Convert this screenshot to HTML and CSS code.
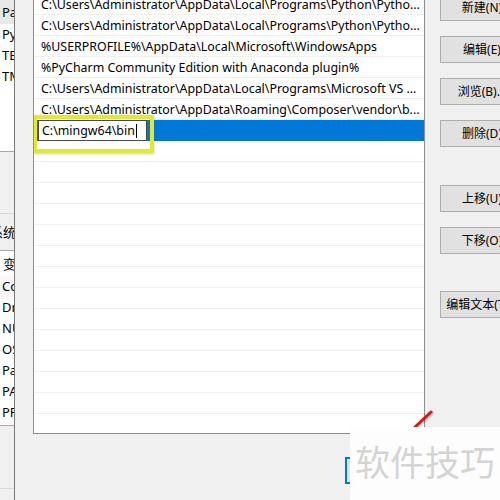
FILE: index.html
```html
<!DOCTYPE html>
<html lang="zh-CN">

<head>
    <meta charset="UTF-8">
    <meta name="viewport" content="width=device-width, initial-scale=1.0">
    <title>编辑环境变量</title>
    <link rel="stylesheet" href="styles.css">
</head>

<body>
    <div class="screen">
        <!-- 后面的“环境变量”窗口，只露出左边一条 -->
        <div class="back">
            <div class="back-list">
                <div class="back-row first">Path</div>
                <div class="back-row">PyCharm Community Edition</div>
                <div class="back-row">TEMP</div>
                <div class="back-row">TMP</div>
            </div>
            <div class="back-sep"></div>
            <div class="back-label">系统变量(S)</div>
            <div class="back-list sys">
                <div class="back-head">变量</div>
                <div class="back-row soft">ComSpec</div>
                <div class="back-row">DriverData</div>
                <div class="back-row">NUMBER_OF_PROCESSORS</div>
                <div class="back-row">OS</div>
                <div class="back-row">Path</div>
                <div class="back-row">PATHEXT</div>
                <div class="back-row">PROCESSOR_ARCHITECTURE</div>
            </div>
            <div class="back-sep low"></div>
        </div>

        <!-- 编辑环境变量对话框 -->
        <div class="front">
            <div class="main">
                <div class="path-list">
                    <div class="path-row">C:\Users\Administrator\AppData\Local\Programs\Python\Pytho...</div>
                    <div class="path-row">C:\Users\Administrator\AppData\Local\Programs\Python\Pytho...</div>
                    <div class="path-row">%USERPROFILE%\AppData\Local\Microsoft\WindowsApps</div>
                    <div class="path-row">%PyCharm Community Edition with Anaconda plugin%</div>
                    <div class="path-row">C:\Users\Administrator\AppData\Local\Programs\Microsoft VS ...</div>
                    <div class="path-row">C:\Users\Administrator\AppData\Roaming\Composer\vendor\b...</div>
                    <div class="path-row selected">
                        <div class="edit-box">C:\mingw64\bin<span class="caret"></span></div>
                        <div class="mark"></div>
                    </div>
                    <div class="path-row"></div>
                    <div class="path-row"></div>
                    <div class="path-row"></div>
                    <div class="path-row"></div>
                    <div class="path-row"></div>
                    <div class="path-row"></div>
                    <div class="path-row"></div>
                    <div class="path-row"></div>
                    <div class="path-row"></div>
                    <div class="path-row"></div>
                    <div class="path-row"></div>
                    <div class="path-row"></div>
                    <div class="path-row"></div>
                </div>

                <div class="side">
                    <div class="win-btn">新建(N)</div>
                    <div class="win-btn">编辑(E)</div>
                    <div class="win-btn">浏览(B)...</div>
                    <div class="win-btn">删除(D)</div>
                    <div class="win-btn move">上移(U)</div>
                    <div class="win-btn">下移(O)</div>
                    <div class="win-btn text">编辑文本(T)...</div>
                </div>
            </div>

            <div class="footer">
                <div class="win-btn ok">确定</div>
            </div>
        </div>

        <svg class="arrow" width="40" height="40" viewBox="0 0 40 40">
            <line x1="26" y1="7" x2="9" y2="23" stroke="#d41a1a" stroke-width="3" stroke-linecap="round" />
        </svg>

        <div class="watermark">软件技巧</div>
    </div>
</body>

</html>
```

FILE: styles.css
```css
:root {
    --dialog: #f0f0f0;
    --line: #f0f0f0;
    --border: #8f8f8f;
    --blue: #0078d7;
}

* {
    box-sizing: border-box;
    margin: 0;
    padding: 0;
}

body {
    width: 500px;
    height: 500px;
    overflow: hidden;
    font-family: 'Noto Sans', 'Noto Sans CJK SC', sans-serif;
    font-size: 12px;
    color: #000;
    background: var(--dialog);
}

.screen {
    position: relative;
    display: flex;
    width: 500px;
    height: 500px;
    overflow: hidden;
}

/* 后面的窗口 */
.back {
    width: 14px;
    flex: none;
    overflow: hidden;
    background: var(--dialog);
}

.back-list {
    width: 200px;
    height: 152px;
    background: white;
    border-bottom: 1px solid #a8a8a8;
}

.back-row {
    height: 21px;
    line-height: 21px;
    padding-left: 2px;
    white-space: nowrap;
    font-size: 13px;
}

.back-row.first {
    height: 24px;
    padding-top: 2px;
    background: #e8e8e8;
}

.back-row.soft {
    background: #f7f7f7;
}

.back-sep {
    width: 200px;
    margin-top: 61px;
    border-top: 1px solid #dadada;
}

.back-sep.low {
    margin-top: 62px;
}

.back-label {
    margin-top: 8px;
    margin-left: -10px;
    line-height: 21px;
    white-space: nowrap;
    font-size: 13px;
}

.back-list.sys {
    height: 176px;
    margin-top: 7px;
    border-top: 1px solid #a8a8a8;
}

.back-head {
    height: 25px;
    padding-top: 3px;
    padding-left: 3px;
    line-height: 21px;
    font-size: 13px;
}

/* 编辑环境变量对话框 */
.front {
    flex: 1;
    display: flex;
    flex-direction: column;
    background: var(--dialog);
    border-left: 1px solid #7a7a7a;
    padding-left: 18px;
}

.main {
    display: flex;
    align-items: flex-start;
}

.path-list {
    width: 392px;
    height: 441px;
    margin-top: -7px;
    flex: none;
    background: white;
    border: 1px solid var(--border);
    overflow: hidden;
}

.path-row {
    position: relative;
    height: 21px;
    padding-left: 7px;
    font-size: 12.4px;
    line-height: 21px;
    border-bottom: 1px solid var(--line);
    white-space: nowrap;
}

.path-row.selected {
    padding-left: 4px;
    background: var(--blue);
    border-bottom-color: var(--blue);
}

.edit-box {
    width: 109px;
    height: 21px;
    padding-left: 3px;
    line-height: 19px;
    background: white;
    border: 1px solid #4a4a4a;
}

.caret {
    display: inline-block;
    width: 1px;
    height: 14px;
    margin-left: 1px;
    vertical-align: -3px;
    background: #000;
}

/* 黄色标注框 */
.mark {
    position: absolute;
    left: -1px;
    top: -5px;
    width: 121px;
    height: 38px;
    border: 4px solid #e2e83a;
    box-shadow: 0 1px 3px rgba(120, 120, 0, 0.35);
}

.side {
    display: flex;
    flex-direction: column;
    gap: 15px;
    margin-top: -6px;
    margin-left: 15px;
}

.win-btn {
    width: 84px;
    height: 27px;
    flex: none;
    line-height: 25px;
    text-align: center;
    white-space: nowrap;
    background: #e1e1e1;
    border: 1px solid #adadad;
}

.win-btn.move {
    margin-top: 23px;
}

.win-btn.text {
    margin-top: 22px;
}

.footer {
    display: flex;
    margin-top: 23px;
    padding-left: 312px;
}

.win-btn.ok {
    width: 90px;
    border: 2px solid var(--blue);
}

.arrow {
    position: absolute;
    left: 405px;
    top: 405px;
    filter: drop-shadow(1px 1px 1px rgba(0, 0, 0, 0.3));
}

.watermark {
    position: absolute;
    left: 350px;
    top: 427px;
    width: 150px;
    height: 73px;
    padding: 14px 0 0 5px;
    background: #fdfdfd;
    color: #d4d4d4;
    font-family: 'Noto Sans CJK SC', sans-serif;
    font-size: 35px;
    line-height: 40px;
    white-space: nowrap;
}
```
